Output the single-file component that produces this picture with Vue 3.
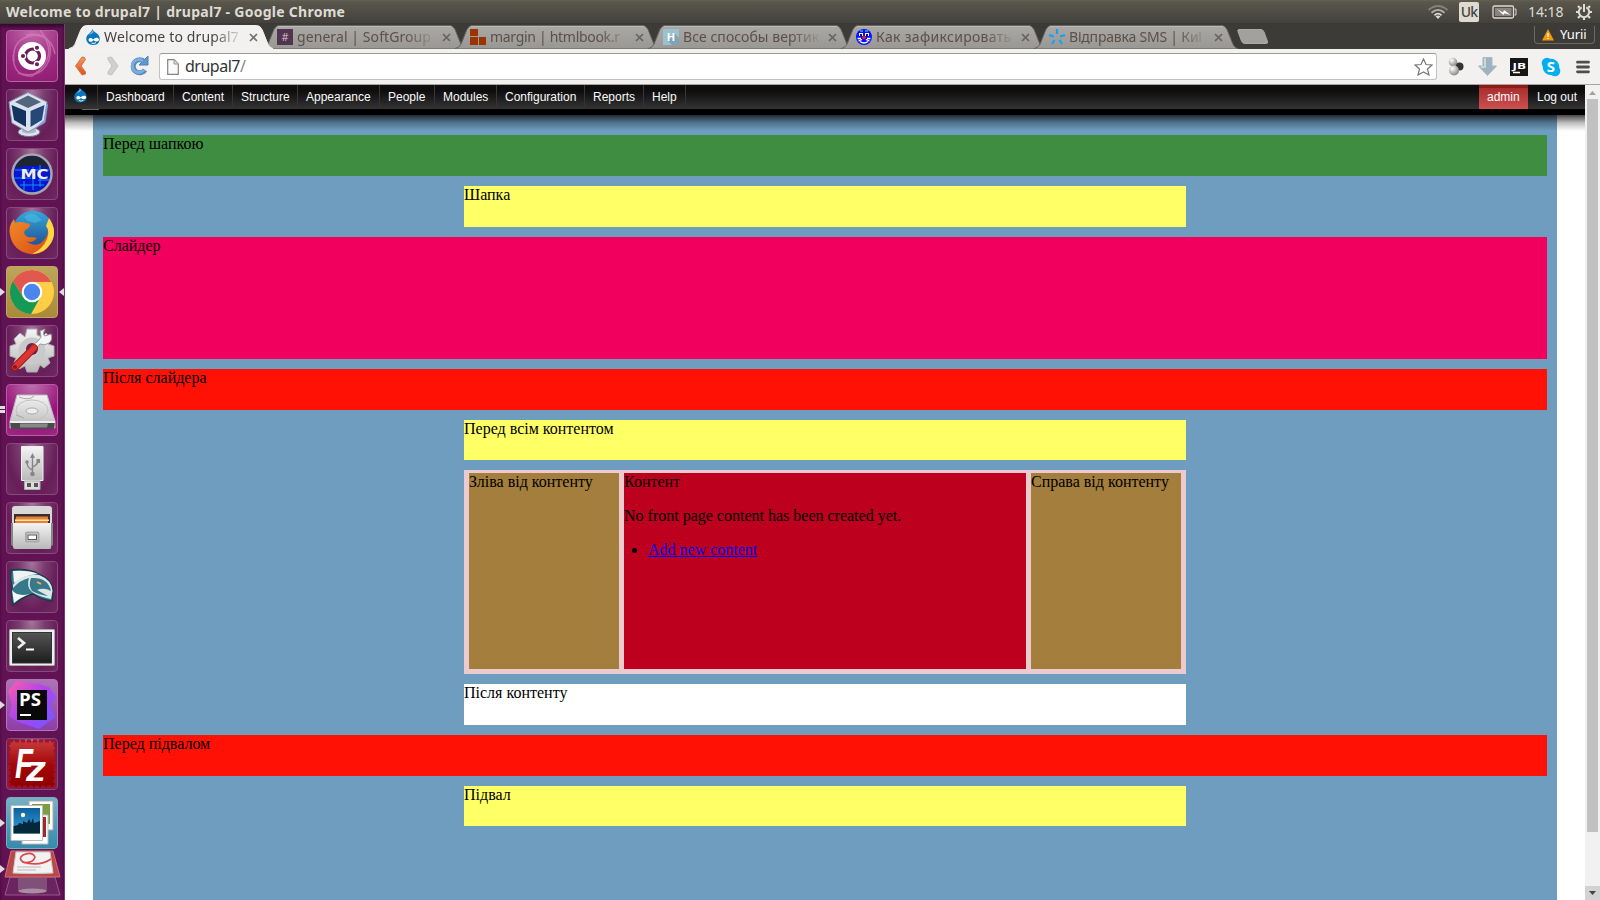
<script setup>
const tabs = [
  { title: 'Welcome to drupal7', icon: 'drupal', active: true, spacing: 0.14 },
  { title: 'general | SoftGroup', icon: 'hash', spacing: 0.08 },
  { title: 'margin | htmlbook.r', icon: 'blocks', spacing: -0.3 },
  { title: 'Все способы вертик', icon: 'h', spacing: 0.05 },
  { title: 'Как зафиксировать', icon: 'clown', spacing: 0.3 },
  { title: 'Відправка SMS | Киї', icon: 'star', spacing: -0.2 },
]
const menu = [
  ['Dashboard', 76], ['Content', 59], ['Structure', 65], ['Appearance', 82], ['People', 55],
  ['Modules', 62], ['Configuration', 88], ['Reports', 59], ['Help', 42],
]
</script>

<template>
  <div class="screen">
    <svg class="defs" width="0" height="0">
      <defs>
        <linearGradient id="silver" x1="0" y1="0" x2="0" y2="1"><stop offset="0" stop-color="#f4f4f4" /><stop offset="1" stop-color="#b9b9b9" /></linearGradient>
        <linearGradient id="tabfill" x1="0" y1="0" x2="0" y2="1"><stop offset="0" stop-color="#aaa9a6" /><stop offset="1" stop-color="#989794" /></linearGradient>
        <linearGradient id="orange" x1="0" y1="0" x2="0" y2="1"><stop offset="0" stop-color="#f39a5d" /><stop offset="1" stop-color="#dc5120" /></linearGradient>
        <linearGradient id="dark" x1="0" y1="0" x2="0" y2="1"><stop offset="0" stop-color="#555" /><stop offset="1" stop-color="#1d1d1d" /></linearGradient>
        <linearGradient id="sky" x1="0" y1="0" x2="0" y2="1"><stop offset="0" stop-color="#0d5f9d" /><stop offset="1" stop-color="#35a5dc" /></linearGradient>
        <linearGradient id="globe" x1="0" y1="0" x2="0" y2="1"><stop offset="0" stop-color="#35a8dd" /><stop offset="1" stop-color="#1c3f86" /></linearGradient>
        <linearGradient id="fox" x1="0" y1="0" x2="1" y2="1"><stop offset="0" stop-color="#f08a24" /><stop offset="1" stop-color="#d84a18" /></linearGradient>
        <linearGradient id="storm" x1="0" y1="0" x2="1" y2="1"><stop offset="0" stop-color="#ff5fa5" /><stop offset=".45" stop-color="#b143f0" /><stop offset="1" stop-color="#6a5cff" /></linearGradient>
        <linearGradient id="fz" x1="0" y1="0" x2="0" y2="1"><stop offset="0" stop-color="#c63a3a" /><stop offset=".5" stop-color="#a50808" /><stop offset="1" stop-color="#8e0000" /></linearGradient>
        <radialGradient id="ball" cx=".35" cy=".3" r=".8"><stop offset="0" stop-color="#fff" /><stop offset="1" stop-color="#777" /></radialGradient>
        <symbol id="drop" viewBox="0 0 16 16">
          <path d="M7.3 0C8 2 10 3 12 4.600Q15 7 14.700 10.500Q14 16 8 16Q1.600 15.600 1.200 10Q1.200 6.500 4.500 4.300Q7 2.700 7.300 0Z" fill="#0a76bb" />
          <path d="M7.300 1C7.300 3 5 4.500 3.600 6Q7.500 5 8.800 2.900Z" fill="#69b9e6" />
          <path d="M8 10.500Q10 8.200 12.500 8.800Q15 10 13.400 12Q11.500 13.300 8.300 11.200Q6.500 13.500 4.500 12.600Q2.500 11 4.500 9.300Q6.200 8.600 8 10.500Z" fill="#fff" />
          <path d="M6.500 14Q9 15.200 11 13.600" fill="none" stroke="#fff" />
        </symbol>
      </defs>
    </svg>

    <header class="panel">
      <div class="wintitle">Welcome to drupal7 | drupal7 - Google Chrome</div>
      <div class="indicators">
        <svg width="22" height="16" viewBox="0 0 22 16" fill="none" stroke-width="1.800"><path d="M1.500 6Q11-2 20.500 6" stroke="#85827a" /><path d="M4.500 8.700Q11 3 17.500 8.700" stroke="#b5b1a7" /><path d="M7.500 11.300Q11 8 14.500 11.300" stroke="#dfdbd2" /><path d="M8.500 12.200L11 15L13.500 12.200Q11 10.800 8.500 12.200Z" fill="#dfdbd2" stroke="none" /></svg>
        <div class="lang">Uk</div>
        <svg class="battery" width="25" height="14" viewBox="0 0 25 14"><rect x="1" y="1" width="20.500" height="12" rx="1.500" fill="none" stroke="#dfdbd2" stroke-width="1.300" /><rect x="3" y="3" width="16.500" height="8" fill="#88857c" /><path d="M22.500 4H24V10H22.500" fill="none" stroke="#dfdbd2" /><path d="M5 4L11 7.500L12 5L18.500 10L12.500 8.300L11.300 10Z" fill="#fff" /></svg>
        <div class="clock">14:18</div>
        <svg width="18" height="18" viewBox="0 0 18 18"><g fill="none" stroke="#dfdbd2"><path d="M6.700 4.300A5.200 5.200 0 1 0 11.300 4.300" stroke-width="2" /><path d="M9 1V9" stroke-width="2" /><path d="M3 3L4.700 4.700M15 3L13.300 4.700M1 9H4M14 9H17M3 15L5 13M15 15L13 13M9 14V17" stroke-width="2.200" /></g></svg>
      </div>
    </header>

    <div class="main">
      <nav class="launcher">
        <div class="tile ubuntu">
          <svg viewBox="0 0 52 52"><g fill="none" stroke="#dc86bd" stroke-width="1.500" opacity=".6"><path d="M8 31Q5 8 29 5Q46 7 49 24" /><path d="M20 5Q50 0 43 30Q35 50 12 43" /><path d="M34 0Q55 27 26 46Q7 47 7 25" /></g><circle cx="26" cy="26" r="14" fill="#fff" /><circle cx="26.500" cy="26" r="7" fill="none" stroke="#6b1d55" stroke-width="3.200" /><g stroke="#fff" stroke-width="1.300"><circle cx="17" cy="26" r="2.700" fill="#6b1d55" /><circle cx="31" cy="17.800" r="2.700" fill="#6b1d55" /><circle cx="31" cy="34.200" r="2.700" fill="#6b1d55" /></g></svg>
        </div>
        <div class="tile">
          <svg viewBox="0 0 52 52"><ellipse cx="23" cy="43" rx="11" ry="4.500" fill="#dfe4ec" stroke="#60718d" /><path d="M16 36H30V43Q23 46 16 43Z" fill="#acb9cc" /><path d="M3 13L22 3.500L41 13L38 34L22 43L6 34Z" fill="#d9e2ed" stroke="#8799b3" /><path d="M9 13L22 6.500L35 13L22 19Z" fill="#52657c" /><path d="M5.500 16L20 22V38L8 31Z" fill="#15335f" /><path d="M24.500 22L38.500 16L36 31L24.500 38Z" fill="#264879" /><path d="M38 31L40.500 14L42 16L39.500 33L27 41Z" fill="#7da1dd" /></svg>
        </div>
        <div class="tile">
          <svg viewBox="0 0 52 52"><circle cx="26" cy="26" r="19.500" fill="#0716cc" stroke="#a4a8aa" stroke-width="2.500" /><path d="M9 20A18 18 0 0 1 43 20Q28 15 9 20Z" fill="#1e2530" /><path d="M9 22H23M8 30H25M14 37H38M27 19V42M34 17V39M18 33V42M28 22H43M32 32H43" fill="none" stroke="#178dff" stroke-width="1" /><text x="14.500" y="30.500" class="mctext" textLength="28" lengthAdjust="spacingAndGlyphs">MC</text></svg>
        </div>
        <div class="tile">
          <svg viewBox="0 0 52 52"><circle cx="27" cy="25" r="21" fill="url(#globe)" /><path d="M18 10Q24 4 30 8L36 13L29 16L22 14Z" fill="#4dbae0" opacity=".6" /><path d="M43 12Q51 23 46 35Q38 49 24 47Q7 44 4 28Q2 19 8 12L9 16Q14 14 20 16L24 17Q24 21 19 23L18 26Q20 31 26 30L31 31Q26 37 20 34Q31 42 38 33Q43 27 42 20Q40 18 43 12Z" fill="url(#fox)" /><path d="M43 11Q52 24 45 36Q38 47 26 47Q37 42 41 32Q44 24 40 19Z" fill="#ffd540" /></svg>
        </div>
        <div class="tile chrome">
          <i class="arrow"></i><i class="arrow back"></i>
          <svg viewBox="0 0 52 52"><circle cx="26" cy="26" r="22" fill="#ffce45" /><path d="M6.900 15A22 22 0 0 1 45.500 16H26L17 31Z" fill="#e0584e" /><path d="M6.900 15A22 22 0 0 0 25 48L34.500 31Q27 39 17 31Z" fill="#159957" /><circle cx="26" cy="26" r="10.300" fill="#fff" /><circle cx="26" cy="26" r="8.200" fill="#4b86ec" /></svg>
        </div>
        <div class="tile">
          <svg viewBox="0 0 52 52"><path d="M21 4H31V10L36 12L40 8L45 14L42 19L48 21V31L42 33L44 38L38 43L34 40L31 47H21L19 41L13 44L8 38L10 33L4 31V21L10 19L8 14L14 8L19 12Z" fill="url(#silver)" stroke="#aaa" /><circle cx="26" cy="26" r="10" fill="none" stroke="#c9c9c9" stroke-width="7" /><circle cx="26" cy="24" r="6" fill="#6a1f5e" /><path d="M35 12L34 6L39 4Q36 10 39 11L45 9Q47 15 43 18Q39 21 34 19L28 26L24 22L32 16Z" fill="#f5f5f5" stroke="#999" /><path d="M9 42L28 23" stroke="#9f1818" stroke-width="7.500" stroke-linecap="round" /><path d="M9 42L28 23" stroke="#df3434" stroke-width="5.500" stroke-linecap="round" /><circle cx="9" cy="42" r="2" fill="#8c1717" /></svg>
        </div>
        <div class="tile pink">
          <i class="bars"></i>
          <svg viewBox="0 0 52 52"><path d="M11 11H41L49 37V44H4V37Z" fill="url(#silver)" stroke="#bbb" /><path d="M4 38H49L48 45H5Z" fill="#4b4b4b" /><path d="M4 37H49V39H4Z" fill="#eee" /><path d="M14 39.500H42L41 43.500H14Z" fill="#888" /><ellipse cx="26" cy="26" rx="16" ry="10" fill="none" stroke="#c2c2c2" /><ellipse cx="26" cy="27" rx="6" ry="3" fill="#eee" stroke="#aaa" /><path d="M13 13Q23 17 28 12M10 31L18 34" fill="none" stroke="#aaa" /></svg>
        </div>
        <div class="tile">
          <svg viewBox="0 0 52 52"><path d="M15.500 3.500H37V37.500H15.500Z" fill="url(#silver)" stroke="#eee" /><path d="M18.500 38H34V46.500H18.500Z" fill="#ddd" stroke="#aaa" /><path d="M21 40H25V44H21ZM28 40H32V44H28Z" fill="#555" /><path d="M26.500 13V31M26.500 27Q21 25 21 19M26.500 24Q32 22 32 17" fill="none" stroke="#858585" stroke-width="1.400" /><path d="M24 15L26.500 10L29 15Z" fill="#858585" /><circle cx="26.500" cy="31" r="2.300" fill="#858585" /><circle cx="21" cy="19" r="1.800" fill="#858585" /><path d="M30.500 16H34V20H30.500Z" fill="#858585" /></svg>
        </div>
        <div class="tile">
          <svg viewBox="0 0 52 52"><path d="M6 7Q6 4 9 4H43Q46 4 46 7V24H6Z" fill="#d8d8d8" /><path d="M8 12H44V22H8Z" fill="#383028" /><path d="M10 14.500H42V21H9Z" fill="#e78033" /><path d="M9 17.500H43V19H9Z" fill="#ffe1b0" /><path d="M5 43V21H8V45ZM44 21H47V43L44 45Z" fill="#858585" /><path d="M7 21H45V46Q45 47 43 47H9Q7 47 7 45Z" fill="url(#silver)" /><rect x="20" y="30.500" width="12.500" height="9" rx="1" fill="#ddd" stroke="#aaa" stroke-width="2" /><rect x="22" y="33" width="8.500" height="4.500" fill="#fff" stroke="#555" /></svg>
        </div>
        <div class="tile">
          <svg viewBox="0 0 52 52"><path d="M5 9Q22 7 33 13Q46 19 47 29L46 40Q36 39 27 33Q18 35 7 44Q5 37 6 26Q4 18 5 9Z" fill="#34788a" stroke="#153b4a" stroke-width="1.300" /><path d="M7 10Q23 9 32 13Q18 14 8 22Z" fill="#eff3f3" /><path d="M7 24Q13 15 26 14L33 14Q46 19 46.500 30L45 38Q34 36 26 31Q20 26 23 17Q14 19 7 27Z" fill="#dce7e8" /><path d="M25 17Q42 16 45 30Q38 26 31 29L42 35Q33 34 26 30Q22 24 25 17Z" fill="#39788a" /><path d="M6 29Q11 36 24 33Q15 36 8 42Z" fill="#f5f6f5" /><path d="M31 21L35 23" stroke="#ffb158" stroke-width="1.800" /></svg>
        </div>
        <div class="tile">
          <svg viewBox="0 0 52 52"><rect x="3.500" y="9.500" width="45" height="36" rx="1" fill="#eee" stroke="#aaa" /><rect x="6.500" y="12.500" width="39" height="30.500" fill="url(#dark)" stroke="#333" /><path d="M12 18L18 23L12 28" fill="none" stroke="#eee" stroke-width="2.700" /><path d="M20 29.500H28" stroke="#fff" stroke-width="2" /></svg>
        </div>
        <div class="tile storm">
          <i class="arrow"></i>
          <svg viewBox="0 0 52 52"><path d="M10 2L33 5L43 8L50 18L45 26L49 38L33 50L10 42L3 37L6 26L2 12Z" fill="url(#storm)" /><rect x="11" y="11" width="30" height="30" fill="#0b080b" /><text x="13" y="27" class="pstext" textLength="22" lengthAdjust="spacingAndGlyphs">PS</text><path d="M14 36H25" stroke="#fff" stroke-width="2" /></svg>
        </div>
        <div class="tile">
          <svg viewBox="0 0 52 52"><rect x="3" y="3" width="46" height="46" fill="url(#fz)" stroke="#a3122a" stroke-width="3" stroke-dasharray="4 2" /><text x="9" y="40" class="fztext" textLength="18" lengthAdjust="spacingAndGlyphs">F</text><text x="20" y="43" class="fztext small" textLength="20" lengthAdjust="spacingAndGlyphs">z</text></svg>
        </div>
        <div class="tile photos">
          <i class="arrow"></i>
          <svg viewBox="0 0 52 52"><path d="M23 4H47V33H23Z" fill="#fff" stroke="#aaa" /><path d="M26 7H44V27H26Z" fill="#7c9d42" /><path d="M16 18H42V47H16Z" fill="#fff" stroke="#bbb" /><path d="M34 20H40V40H34Z" fill="#a42828" /><path d="M5 8.500H36.500V43.500H5Z" fill="#fff" stroke="#bbb" /><path d="M7.500 11H34V36.500H7.500Z" fill="url(#sky)" /><path d="M7.500 29L12 28L13 26L17 27V24L21 26L23 22L25 26L27 21L28 26L34 24V36.500H7.500Z" fill="#06283d" /><circle cx="17" cy="18" r="2.200" fill="#fff6bb" /></svg>
        </div>
        <div class="folded">
          <i class="arrow"></i>
          <svg viewBox="0 0 57 47"><path d="M6 27L1 45H56L51 27Z" fill="#6c2461" stroke="#96598c" /><path d="M14 28H43V41Q28 44 14 41Z" fill="#805078" /><ellipse cx="28.500" cy="41" rx="14" ry="2.500" fill="#aa8da3" /><path d="M7 1H49L56 27H1Z" fill="#b8484b" stroke="#ce7070" /><path d="M12 2H46L49 23Q29 24 9 23Z" fill="#f2f2f2" stroke="#ccc" /><path d="M21 13Q13 9 19 5Q28 1 31 7Q29 14 18 12Q36 17 47 9" fill="none" stroke="#d84a4a" stroke-width="1.600" /><path d="M13 17H37M13 20H32" stroke="#bbb" /></svg>
        </div>
      </nav>

      <section class="browser">
        <div class="tabstrip">
          <div v-for="t in tabs" :key="t.title" class="tab" :class="{ active: t.active }">
            <svg class="shape" width="212" height="25" viewBox="0 0 212 25"><path d="M0 24.500Q4 24 6 20L12 5Q14 .5 18 .5H195Q199 .5 201 5L207 20Q209 24 212 24.500V25H0Z" :fill="t.active ? '#f2f1f0' : 'url(#tabfill)'" :stroke="t.active ? '#f7f6f5' : '#605f5b'" stroke-width="1" /><path v-if="!t.active" d="M16 1.500H197" stroke="#bdbcb9" /></svg>
            <svg class="fav" width="16" height="16" viewBox="0 0 16 16">
              <use v-if="t.icon === 'drupal'" href="#drop" />
              <g v-else-if="t.icon === 'hash'"><rect width="16" height="16" fill="#51344f" /><text x="8" y="12" text-anchor="middle" class="favtext hash">#</text></g>
              <path v-else-if="t.icon === 'blocks'" d="M0 0H8V7H0ZM0 8H8V16H0ZM9 8H16V16H9Z" fill="#9a3500" />
              <g v-else-if="t.icon === 'h'"><rect width="16" height="16" fill="#9cc0cd" /><path d="M5 12L11 4L16 9V16H9Z" fill="#7fa5b2" /><text x="8" y="12" text-anchor="middle" class="favtext">H</text></g>
              <g v-else-if="t.icon === 'clown'"><circle cx="8" cy="8" r="8" fill="#0a10f5" /><path d="M3 4H7V7H3ZM9 4H13V7H9Z" fill="#fff" /><path d="M1.500 9.500H5M11 9.500H14.500M2.500 12L6 10.500M13.500 12L10 10.500M4 12.500Q8 15.500 12 12.500" fill="none" stroke="#fff" stroke-width="1.300" /><path d="M4 5H6V7H4ZM10 5H12V7H10Z" fill="#071070" /><path d="M4 2H7M9 2H12" stroke="#57e6ef" /><circle cx="8" cy="8.500" r="1.800" fill="#f02020" /></g>
              <path v-else d="M8 0V5M0 6L5 7.500M16 6L11 7.500M5.500 11L3 15M10.500 11L13 15" stroke="#12a2f5" stroke-width="2.200" />
            </svg>
            <span class="tabtitle" :style="{ letterSpacing: t.spacing + 'px' }">{{ t.title }}</span>
            <svg class="close" width="9" height="9" viewBox="0 0 9 9"><path d="M1 1L8 8M8 1L1 8" :stroke="t.active ? '#74706d' : '#69625f'" stroke-width="1.700" /></svg>
          </div>
          <svg class="newtab" width="32" height="16" viewBox="0 0 32 16"><path d="M2 .5H24Q26 .5 27 3L30.500 12.500Q31 14.500 29.500 14.500H8Q5.500 14.500 4.500 12L1 2.500Q.3 .5 2 .5Z" fill="#a2a19e" stroke="#aaa9a6" /></svg>
          <div class="user"><svg width="12" height="12" viewBox="0 0 12 12"><path d="M6 0L12 11.500H0Z" fill="#f59b0b" /><path d="M6 4V8M6 9V10" stroke="#fff" stroke-width="1.300" /></svg><span>Yurii</span></div>
        </div>

        <div class="toolbar">
          <svg class="navicons" width="94" height="24" viewBox="0 0 94 24"><path d="M19.500 3.500L17 3L10.500 12L17 21L20.500 20V18L16 12L20.500 5.500Z" fill="url(#orange)" stroke="#d77444" /><path d="M43 3.500L46.500 3L53 12L46.500 21L43 20V18L47 12L43 5.500Z" fill="#d2d0cf" stroke="#c3c1bf" /><path d="M79.500 8A6.500 6.500 0 1 0 80 16" fill="none" stroke="#5689bd" stroke-width="5" /><path d="M74 11H83V2Z" fill="#5f99d0" stroke="#4e80b3" /><path d="M78 7A6.500 6.500 0 1 0 79 16" fill="none" stroke="#7cafe0" stroke-width="2.800" /></svg>
          <div class="omnibox">
            <svg width="12" height="16" viewBox="0 0 12 16"><path d="M.7 .7H7L11.300 5V15.300H.7Z" fill="#fafafa" stroke="#858585" stroke-width="1.200" /><path d="M7 1V5H11" fill="#ddd" stroke="#999" /></svg>
            <span>drupal7<b>/</b></span>
            <svg class="bookmark" width="19" height="18" viewBox="0 0 19 18"><path d="M9.500 1L12 6.500L18 7L13.500 11L15 17L9.500 14L4 17L5.500 11L1 7L7 6.500Z" fill="#fff" stroke="#777" stroke-width="1.200" /></svg>
          </div>
          <div class="extensions">
            <svg width="16" height="19" viewBox="0 0 16 19"><circle cx="11.500" cy="9.500" r="4" fill="#333" /><circle cx="5" cy="5" r="4.300" fill="url(#ball)" /><circle cx="6" cy="13.500" r="5" fill="url(#ball)" /></svg>
            <svg width="19" height="19" viewBox="0 0 19 19"><path d="M5 .5H14V9H18.500L9.500 18.500L.5 9H5Z" fill="#9eb3bf" stroke="#a7bac3" /><path d="M7 1V10H3" fill="none" stroke="#cbd6db" stroke-width="2" /></svg>
            <svg width="18" height="18" viewBox="0 0 18 18"><rect width="18" height="18" fill="#161616" /><text x="2.500" y="10.500" class="jbtext" textLength="13.500" lengthAdjust="spacingAndGlyphs">JB</text><path d="M3 14.500H10" stroke="#fff" stroke-width="1.500" /></svg>
            <svg width="20" height="20" viewBox="0 0 20 20"><circle cx="10" cy="10" r="8.300" fill="#00aff0" /><circle cx="6" cy="6" r="5.300" fill="#00aff0" /><circle cx="14" cy="14" r="5.300" fill="#00aff0" /><text x="10" y="15.300" text-anchor="middle" class="skype">S</text></svg>
            <svg width="14" height="14" viewBox="0 0 14 14"><path d="M1.500 2.200H12.500M1.500 7H12.500M1.500 11.800H12.500" stroke="#4d4d4d" stroke-width="2.800" stroke-linecap="round" /></svg>
          </div>
        </div>

        <div class="viewport">
          <div class="page">
            <div class="admin">
              <div class="home"><svg width="15" height="16" viewBox="0 0 16 16"><use href="#drop" /></svg></div>
              <a v-for="m in menu" :key="m[0]" :style="{ width: m[1] + 'px' }">{{ m[0] }}</a>
              <a class="account">admin</a>
              <a class="logout">Log out</a>
            </div>
            <div class="drawer"><i></i></div>
            <div class="wrapper">
              <div class="region green">Перед шапкою</div>
              <div class="region yellow narrow">Шапка</div>
              <div class="region slider">Слайдер</div>
              <div class="region red">Після слайдера</div>
              <div class="region yellow narrow short">Перед всім контентом</div>
              <div class="columns narrow">
                <div class="side">Зліва від контенту</div>
                <div class="content">Контент
                  <p>No front page content has been created yet.</p>
                  <ul><li><a>Add new content</a></li></ul>
                </div>
                <div class="side">Справа від контенту</div>
              </div>
              <div class="region white narrow">Після контенту</div>
              <div class="region red">Перед підвалом</div>
              <div class="region yellow narrow short">Підвал</div>
            </div>
          </div>
          <div class="scrollbar">
            <svg width="15" height="14" viewBox="0 0 15 14"><path d="M4 10L7.500 6L11 10Z" fill="#a0a0a0" /></svg>
            <div class="thumb"></div>
            <svg class="down" width="15" height="14" viewBox="0 0 15 14"><path d="M4 5H11L7.500 9Z" fill="#444" /></svg>
          </div>
        </div>
      </section>
    </div>
  </div>
</template>

<style>
body { margin: 0; overflow: hidden; }
</style>

<style scoped>
* { box-sizing: border-box; }
svg { display: block; flex: none; }
.defs { position: absolute; }
.screen { width: 1600px; height: 900px; overflow: hidden; display: flex; flex-direction: column; font-family: "Noto Sans", "Open Sans", sans-serif; }
.panel { height: 24px; flex: none; display: flex; justify-content: space-between; align-items: center; padding: 0 7px 0 6px; background: linear-gradient(#65624f 0, #59564d 2px, #42413b 23px, #33322e); color: #dfdbd2; }
.wintitle { font-size: 14px; font-weight: 700; line-height: 24px; white-space: nowrap; letter-spacing: .27px; }
.indicators { display: flex; align-items: center; }
.lang { width: 20px; height: 20px; margin: 0 1px 0 10px; background: #dfdbd2; border-radius: 2px; color: #45443e; font-size: 14px; font-weight: 500; line-height: 20px; text-align: center; letter-spacing: -.8px; }
.battery { margin-left: 12px; }
.clock { width: 36px; margin: 0 11px 0 11px; font-size: 14px; line-height: 24px; letter-spacing: -.1px; }
.main { display: flex; height: 876px; }

.launcher { width: 65px; flex: none; background: #611253; border-right: 1px solid #7d3970; padding: 6px 0 0 6px; display: flex; flex-direction: column; gap: 7px; box-shadow: inset 0 3px 3px #390a31; }
.tile { position: relative; width: 52px; height: 52px; flex: none; border-radius: 4px; border: 1px solid #874a7d; background: radial-gradient(ellipse at 50% 0, #a5759c 0, #7b3d70 35%, #671e59 70%, #6e2a61); }
.tile svg { width: 52px; height: 52px; margin: -1px; }
.tile.ubuntu { background: radial-gradient(circle at 50% 0, #c36aac, #9b2a80 60%, #8e1d72); border-color: #b865a4; }
.tile.pink { background: radial-gradient(circle at 50% 0, #bd71ac, #99107c 60%, #9b2881); border-color: #ba5ba5; }
.tile.chrome { background: linear-gradient(#bda55b, #a98a38); border-color: #bda767; }
.tile.storm { background: linear-gradient(#ad72b8, #8e3da8); border-color: #b075bd; }
.tile.photos { background: linear-gradient(#78b0c3, #358bad); border-color: #72afc3; }
.arrow { position: absolute; left: -7px; top: 21px; border: 4.500px solid transparent; border-left: 5px solid #ddd; border-right: 0; }
.arrow.back { left: 52px; border: 4.500px solid transparent; border-right: 5px solid #ddd; border-left: 0; }
.bars { position: absolute; left: -7px; top: 21px; width: 5px; height: 7px; border-top: 3px solid #ddd; border-bottom: 3px solid #ddd; }
.folded { position: relative; width: 57px; height: 47px; margin: -6px 0 0 -2px; flex: none; }
.folded .arrow { left: -4px; top: 15px; }
.pstext { font: 700 17px "Open Sans", sans-serif; fill: #fff; }
.jbtext { font: 700 9px "Open Sans", sans-serif; fill: #fff; }
.mctext { font: 700 14px "DejaVu Sans", sans-serif; fill: #eee; }
.fztext { font: italic 700 42px "Liberation Sans", sans-serif; fill: #fff; }
.fztext.small { font-size: 35px; }
.favtext { font: 700 11px "Open Sans", sans-serif; fill: #fff; }
.favtext.hash { font-weight: 400; fill: #d0c3cd; }
.skype { font: 700 15px "Open Sans", sans-serif; fill: #fff; }

.browser { flex: 1; display: flex; flex-direction: column; min-width: 0; }
.tabstrip { height: 25px; flex: none; background: #3c3b37; display: flex; position: relative; }
.tab { position: relative; width: 193px; height: 25px; flex: none; display: flex; align-items: center; padding-left: 19px; color: #5d4f48; }
.tab.active { z-index: 2; color: #45423f; padding-left: 20px; }
.tab .shape { position: absolute; left: 0; top: 1px; height: 24px; }
.fav { position: relative; margin-top: 1px; }
.tabtitle { position: relative; width: 138px; margin-left: 4px; overflow: hidden; white-space: nowrap; font-size: 14px; line-height: 24px; mask-image: linear-gradient(90deg, #000 108px, transparent 140px); }
.active .tabtitle { margin-left: 3px; }
.close { position: relative; margin: 1px 0 0 9px; }
.newtab { margin: 5px 0 0 14px; }
.user { margin: 2px 5px 0 auto; width: 61px; height: 18px; border: 1px solid #6b6963; border-top: 0; border-radius: 0 0 4px 4px; display: flex; align-items: center; gap: 6px; padding-left: 7px; color: #fff; font-size: 13px; line-height: 17px; letter-spacing: -.1px; }
.toolbar { height: 36px; flex: none; position: relative; background: #f2f1f0; border-bottom: 1px solid #a7a5a3; display: flex; padding-top: 4px; }
.navicons { margin-top: 1px; }
.omnibox { width: 1278px; height: 27px; border: 1px solid #c3c2c0; border-top-color: #9b9a98; border-radius: 3px; background: #fff; display: flex; align-items: center; padding: 0 3px 0 7px; font-size: 16px; color: #333; }
.omnibox span { margin-left: 6px; line-height: 22px; padding-bottom: 2px; letter-spacing: -.5px; }
.omnibox b { font-weight: 400; color: #888; }
.bookmark { margin-left: auto; }
.extensions { height: 27px; display: flex; align-items: center; margin-left: 11px; }
.extensions svg:nth-child(2) { margin-left: 14px; }
.extensions svg:nth-child(3) { margin-left: 13px; }
.extensions svg:nth-child(4) { margin-left: 13px; }
.extensions svg:nth-child(5) { margin-left: 15px; }

.viewport { flex: 1; display: flex; min-height: 0; }
.page { width: 1520px; background: #fff; position: relative; }
.admin { height: 24px; display: flex; background: linear-gradient(#0e0e0e 25%, #343434); font: 12px/22px "Liberation Sans", Arial, sans-serif; color: #fafafa; }
.admin a { height: 24px; flex: none; text-align: left; padding: 1px 0 0 8px; border-right: 1px solid; border-image: linear-gradient(#3b3b3b, #303030) 1; white-space: nowrap; }
.home { width: 33px; height: 24px; border-right: 1px solid #343434; padding: 2px 0 0 8px; }
.admin .account { margin-left: auto; width: 49px; border: 0; background: linear-gradient(#8d1a17 0, #8d1a17 3px, #a92f2f 3px, #cc5050); }
.admin .logout { width: 57px; padding-left: 9px; border: 0; }
.drawer { height: 6px; background: #000; position: relative; }
.drawer i { position: absolute; left: 17px; top: 0; width: 17px; height: 1px; background: #666; }
.drawer::after { content: ""; position: absolute; left: 0; right: 0; top: 6px; height: 16px; background: linear-gradient(rgba(0,0,0,.72), rgba(0,0,0,.25) 50%, transparent); }
.wrapper { width: 1464px; height: 785px; margin: 0 auto; padding: 20px 10px; background: #6f9dbf; display: flex; flex-direction: column; gap: 10px; font: 16px/18px "Liberation Serif", "Times New Roman", serif; color: #000; }
.region { height: 41px; flex: none; }
.short { height: 40px; }
.narrow { width: 722px; align-self: center; }
.green { background: #3f8d40; }
.yellow { background: #ffff66; }
.slider { height: 122px; background: #f2005e; }
.red { background: #ff1205; }
.white { background: #fff; }
.columns { height: 204px; flex: none; background: #eccbd0; padding: 3px 5px 5px; display: flex; gap: 5px; }
.side { width: 150px; background: #a37e3c; }
.content { width: 402px; background: #bc001e; }
.content p { margin: 16px 0; }
.content ul { margin: 0; padding-left: 24px; }
.content a { color: #00e; text-decoration: underline; }
.scrollbar { width: 15px; background: #f1f1f1; display: flex; flex-direction: column; }
.thumb { width: 11px; height: 733px; margin-left: 2px; background: #c1c1c1; }
.down { margin-top: auto; background: #d2d2d2; }
</style>
